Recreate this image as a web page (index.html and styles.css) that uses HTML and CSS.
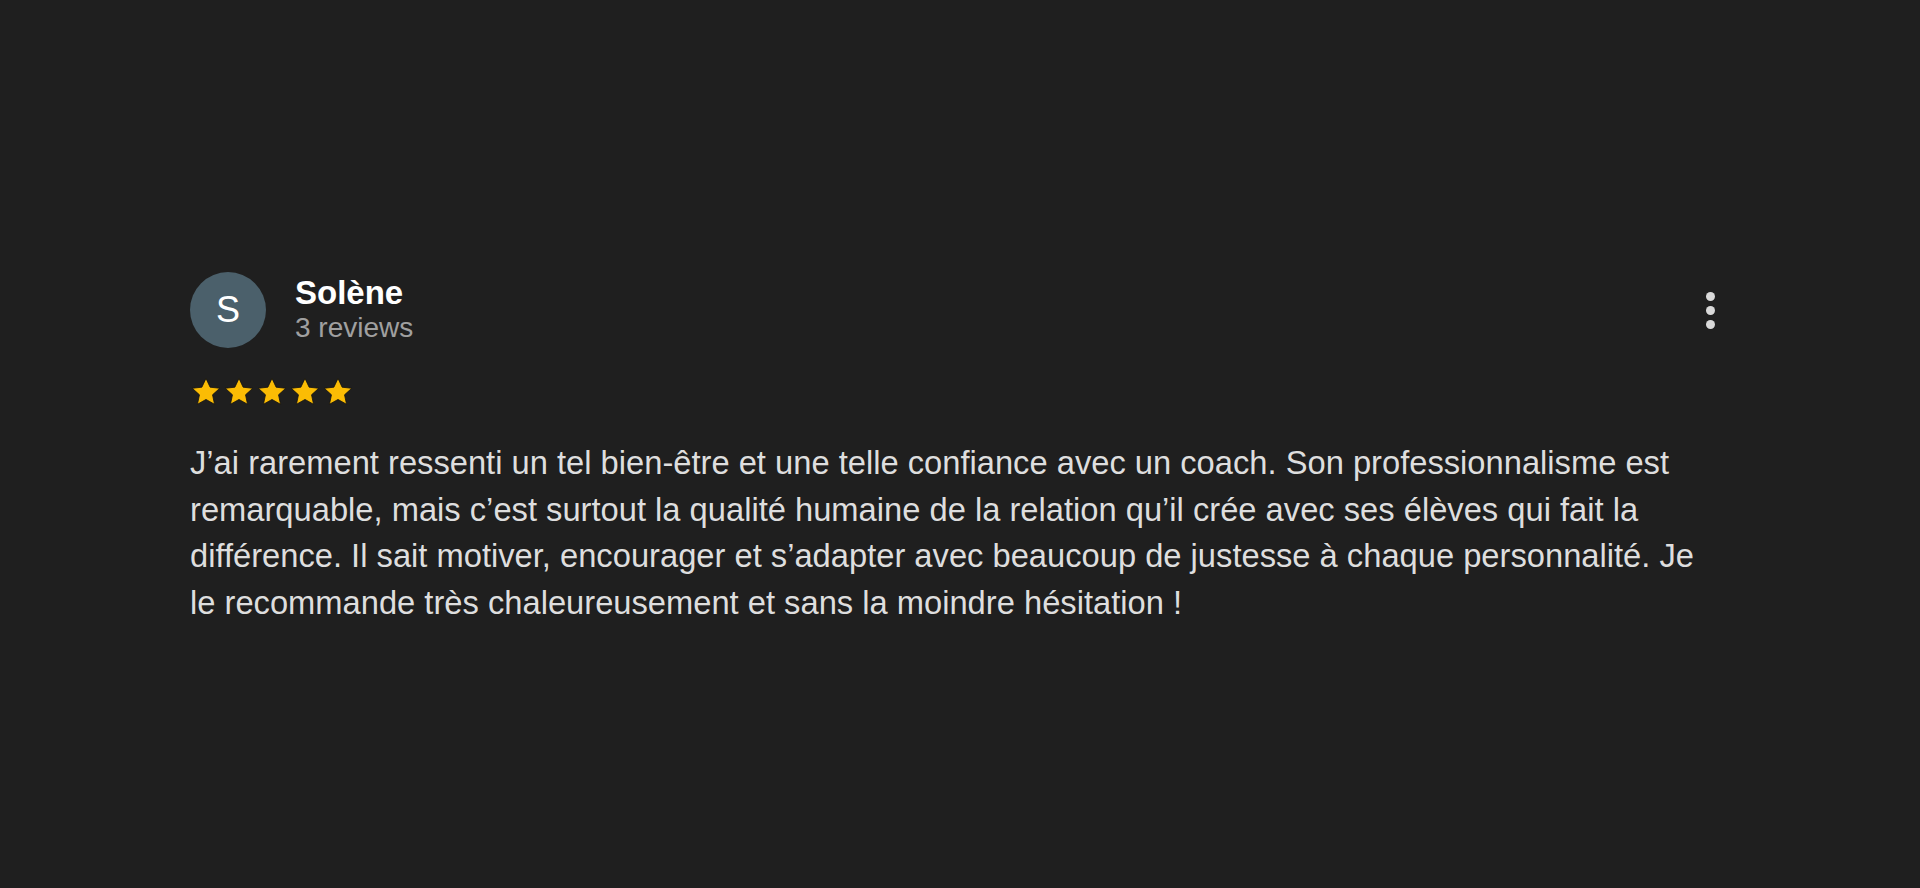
FILE: index.html
```html
<!DOCTYPE html>
<html lang="fr">
<head>
    <meta charset="UTF-8">
    <meta name="viewport" content="width=device-width, initial-scale=1.0">
    <title>Avis - Solène</title>
    <link rel="stylesheet" href="styles.css">
</head>
<body>
    <div class="review">
        <div class="review-header">
            <div class="avatar">S</div>
            <div class="author">
                <div class="author-name">Solène</div>
                <div class="author-meta">3 reviews</div>
            </div>
            <button class="more" type="button" aria-label="Plus d'options">
                <span class="dot"></span>
                <span class="dot"></span>
                <span class="dot"></span>
            </button>
        </div>

        <div class="stars">
            <svg class="star" viewBox="0 0 24 24"><path d="M12 1.8l3.1 6.6 7.2.8-5.4 4.9 1.5 7.1L12 17.6l-6.4 3.6 1.5-7.1L1.7 9.2l7.2-.8z"/></svg>
            <svg class="star" viewBox="0 0 24 24"><path d="M12 1.8l3.1 6.6 7.2.8-5.4 4.9 1.5 7.1L12 17.6l-6.4 3.6 1.5-7.1L1.7 9.2l7.2-.8z"/></svg>
            <svg class="star" viewBox="0 0 24 24"><path d="M12 1.8l3.1 6.6 7.2.8-5.4 4.9 1.5 7.1L12 17.6l-6.4 3.6 1.5-7.1L1.7 9.2l7.2-.8z"/></svg>
            <svg class="star" viewBox="0 0 24 24"><path d="M12 1.8l3.1 6.6 7.2.8-5.4 4.9 1.5 7.1L12 17.6l-6.4 3.6 1.5-7.1L1.7 9.2l7.2-.8z"/></svg>
            <svg class="star" viewBox="0 0 24 24"><path d="M12 1.8l3.1 6.6 7.2.8-5.4 4.9 1.5 7.1L12 17.6l-6.4 3.6 1.5-7.1L1.7 9.2l7.2-.8z"/></svg>
        </div>

        <p class="review-text">J’ai rarement ressenti un tel bien-être et une telle confiance avec un coach. Son professionnalisme est remarquable, mais c’est surtout la qualité humaine de la relation qu’il crée avec ses élèves qui fait la différence. Il sait motiver, encourager et s’adapter avec beaucoup de justesse à chaque personnalité. Je le recommande très chaleureusement et sans la moindre hésitation !</p>
    </div>
</body>
</html>
```

FILE: styles.css
```css
body {
    margin: 0;
    padding: 0;
    background-color: #1f1f1f;
    font-family: 'Liberation Sans', Arial, sans-serif;
    height: 100vh;
}

.review {
    width: 1560px;
    margin-left: 190px;
    padding-top: 272px;
}

.review-header {
    display: flex;
    align-items: center;
}

.avatar {
    width: 76px;
    height: 76px;
    border-radius: 50%;
    background-color: #4b606b;
    color: #fff;
    font-size: 36px;
    display: flex;
    align-items: center;
    justify-content: center;
    flex-shrink: 0;
}

.author {
    margin-left: 29px;
    flex: 1;
}

.author-name {
    color: #fff;
    font-size: 33px;
    font-weight: bold;
    line-height: 36px;
}

.author-meta {
    color: #a0a0a0;
    font-size: 28px;
    line-height: 34px;
}

.more {
    width: 40px;
    height: 48px;
    margin-right: 20px;
    background: none;
    border: none;
    padding: 0;
    display: flex;
    flex-direction: column;
    align-items: center;
    justify-content: center;
    gap: 5px;
    cursor: pointer;
}

.dot {
    width: 9px;
    height: 9px;
    border-radius: 50%;
    background-color: #d9d9d9;
}

.stars {
    margin-top: 28px;
    display: flex;
    gap: 1px;
}

.star {
    width: 32px;
    height: 32px;
    fill: #fbbc04;
    stroke: #111;
    stroke-width: 0.6;
    stroke-linejoin: round;
}

.review-text {
    width: 1525px;
    margin: 32px 0 0;
    color: #dedede;
    font-size: 32.7px;
    line-height: 46.5px;
}
```
